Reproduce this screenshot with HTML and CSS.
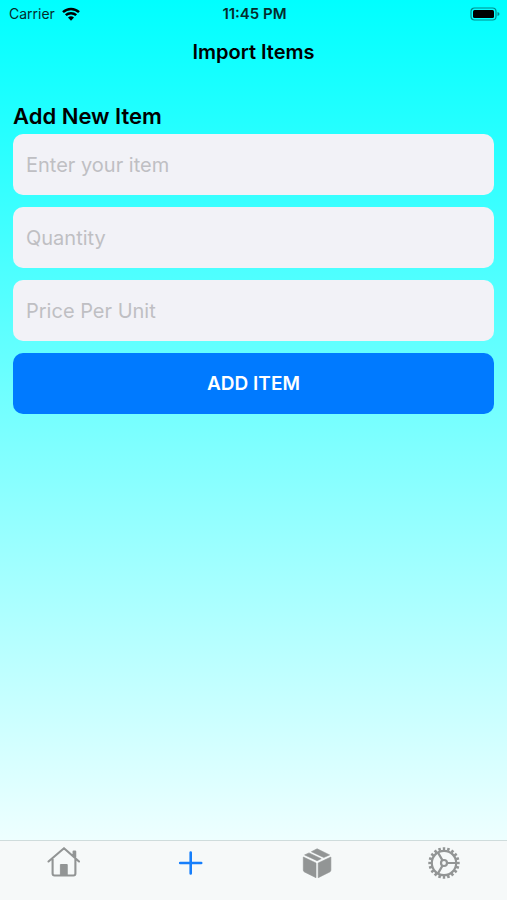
FILE: index.html
```html
<!DOCTYPE html>
<html lang="en">
<head>
<meta charset="utf-8">
<meta name="viewport" content="width=device-width, initial-scale=1">
<title>Import Items</title>
<link rel="stylesheet" href="styles.css">
</head>
<body>
<div class="screen">
  <div class="status">
    <div class="carrier">
      <span>Carrier</span>
      <svg class="wifi" viewBox="0 0 18 14" aria-hidden="true">
        <path d="M1 5.2a11.6 11.6 0 0 1 16 0M3.8 8.2a7.6 7.6 0 0 1 10.4 0" fill="none" stroke="currentColor" stroke-width="2.5"/>
        <path d="M9 13.8l-3-3.2a4.4 4.4 0 0 1 6 0z" fill="currentColor"/>
      </svg>
    </div>
    <time class="clock">11:45 PM</time>
    <svg class="battery" viewBox="0 0 30 14" aria-hidden="true">
      <rect x="1" y="1" width="25" height="12" rx="3.5" fill="none" stroke="#000" stroke-opacity=".45" stroke-width="1.2"/>
      <rect x="3" y="3" width="21" height="8" rx="1.5"/>
      <path d="M27.5 5q2 .6 2 2t-2 2z" opacity=".45"/>
    </svg>
  </div>
  <header class="header"><h1 class="title">Import Items</h1></header>
  <main class="content">
    <h2 class="heading">Add New Item</h2>
    <form class="form">
      <input class="field" type="text" placeholder="Enter your item" aria-label="Enter your item">
      <input class="field" type="text" inputmode="numeric" placeholder="Quantity" aria-label="Quantity">
      <input class="field" type="text" inputmode="decimal" placeholder="Price Per Unit" aria-label="Price Per Unit">
      <button class="submit" type="button">ADD ITEM</button>
    </form>
  </main>
  <nav class="tabs" aria-label="Main">
    <a class="tab" href="#home" aria-label="Home">
      <svg class="icon" viewBox="0 0 34 34" fill="none" stroke="currentColor" stroke-width="2.1" stroke-linecap="round" stroke-linejoin="round" aria-hidden="true">
        <path d="M2.500 15.500L18 2.200l15 13.300M6.600 13v14.500q0 2 2 2h18.800q2 0 2-2V13M27.600 9.500V5.500h1.600V11"/>
        <path d="M14.800 18.500h6.400v11h-6.400z" fill="currentColor" stroke-width="1"/>
      </svg>
    </a>
    <a class="tab tab-active" href="#add" aria-label="Add" aria-current="page">
      <svg class="icon" viewBox="0 0 34 34" fill="none" stroke="currentColor" stroke-width="2.600" stroke-linecap="round" aria-hidden="true">
        <path d="M17.700 6.500v21M7.200 17h21"/>
      </svg>
    </a>
    <a class="tab" href="#inventory" aria-label="Inventory">
      <svg class="icon" viewBox="0 0 34 34" fill="currentColor" stroke="currentColor" stroke-linejoin="round" aria-hidden="true">
        <path d="M3.300 11L16 17v14.700L4.500 26q-1.200-.6-1.200-2zM30.900 11L18.200 17v14.700L29.700 26q1.200-.6 1.200-2z" stroke-width=".6"/>
        <path d="M4.600 8.900l4.400-2 12.200 5.800-4.100 2zM11.400 5.700L17.100 2.800l12.500 6.100-5.800 2.600z" stroke-width=".6"/>
      </svg>
    </a>
    <a class="tab" href="#settings" aria-label="Settings">
      <svg class="icon" viewBox="0 0 34 34" fill="none" stroke="currentColor" stroke-width="2.200" aria-hidden="true">
        <circle cx="17" cy="17" r="12.200"/>
        <circle cx="17" cy="17" r="14.200" stroke-width="3" pathLength="40" stroke-dasharray="1.1 .9" stroke-dashoffset=".55"/>
        <circle cx="17" cy="17" r="3"/>
        <path d="M20 17h9M15.500 14.400L11 6.600M15.500 19.600L11 27.400"/>
      </svg>
    </a>
  </nav>
</div>
</body>
</html>
```

FILE: styles.css
```css
* {
  box-sizing: border-box;
}

body {
  margin: 0;
  font-family: Inter, "Liberation Sans", sans-serif;
  color: #000;
}

.screen {
  display: flex;
  flex-direction: column;
  min-height: 100vh;
  background: linear-gradient(#00ffff, #ffffff);
}

.status {
  display: grid;
  grid-template-columns: 1fr auto 1fr;
  align-items: center;
  height: 28px;
  padding: 0 7px 0 9px;
  font-size: 14px;
  line-height: 20px;
}

.carrier {
  display: flex;
  align-items: center;
  gap: 7px;
  color: #042c2c;
}

.wifi {
  width: 18px;
  height: 14px;
  color: #000;
}

.clock {
  font-size: 15px;
  font-weight: 600;
  color: #042c2c;
}

.battery {
  width: 30px;
  height: 14px;
  justify-self: end;
}

.header {
  display: flex;
  align-items: center;
  justify-content: center;
  height: 48px;
}

.title {
  margin: 0;
  font-size: 20px;
  font-weight: 600;
  line-height: 24px;
}

.content {
  flex: 1;
  padding: 26px 13px 0;
}

.heading {
  margin: 0 0 4px;
  font-size: 22px;
  font-weight: 600;
  line-height: 28px;
}

.form {
  display: flex;
  flex-direction: column;
  gap: 12px;
}

.field,
.submit {
  width: 100%;
  height: 61px;
  border: 0;
  border-radius: 10px;
  font-family: inherit;
  font-size: 20px;
}

.field {
  padding: 0 13px;
  background: #f2f2f7;
  color: #000;
}

.field::placeholder {
  color: #bfbfc3;
  opacity: 1;
}

.submit {
  background: #007aff;
  color: #fff;
  font-size: 19px;
  font-weight: 600;
}

.tabs {
  display: grid;
  grid-template-columns: repeat(4, 1fr);
  height: 60px;
  border-top: 1px solid #cfdcdc;
  background: #f6f9f9;
}

.tab {
  display: flex;
  justify-content: center;
  padding-top: 5px;
  color: #929595;
}

.tab-active {
  color: #157efb;
}

.icon {
  width: 34px;
  height: 34px;
}
```
